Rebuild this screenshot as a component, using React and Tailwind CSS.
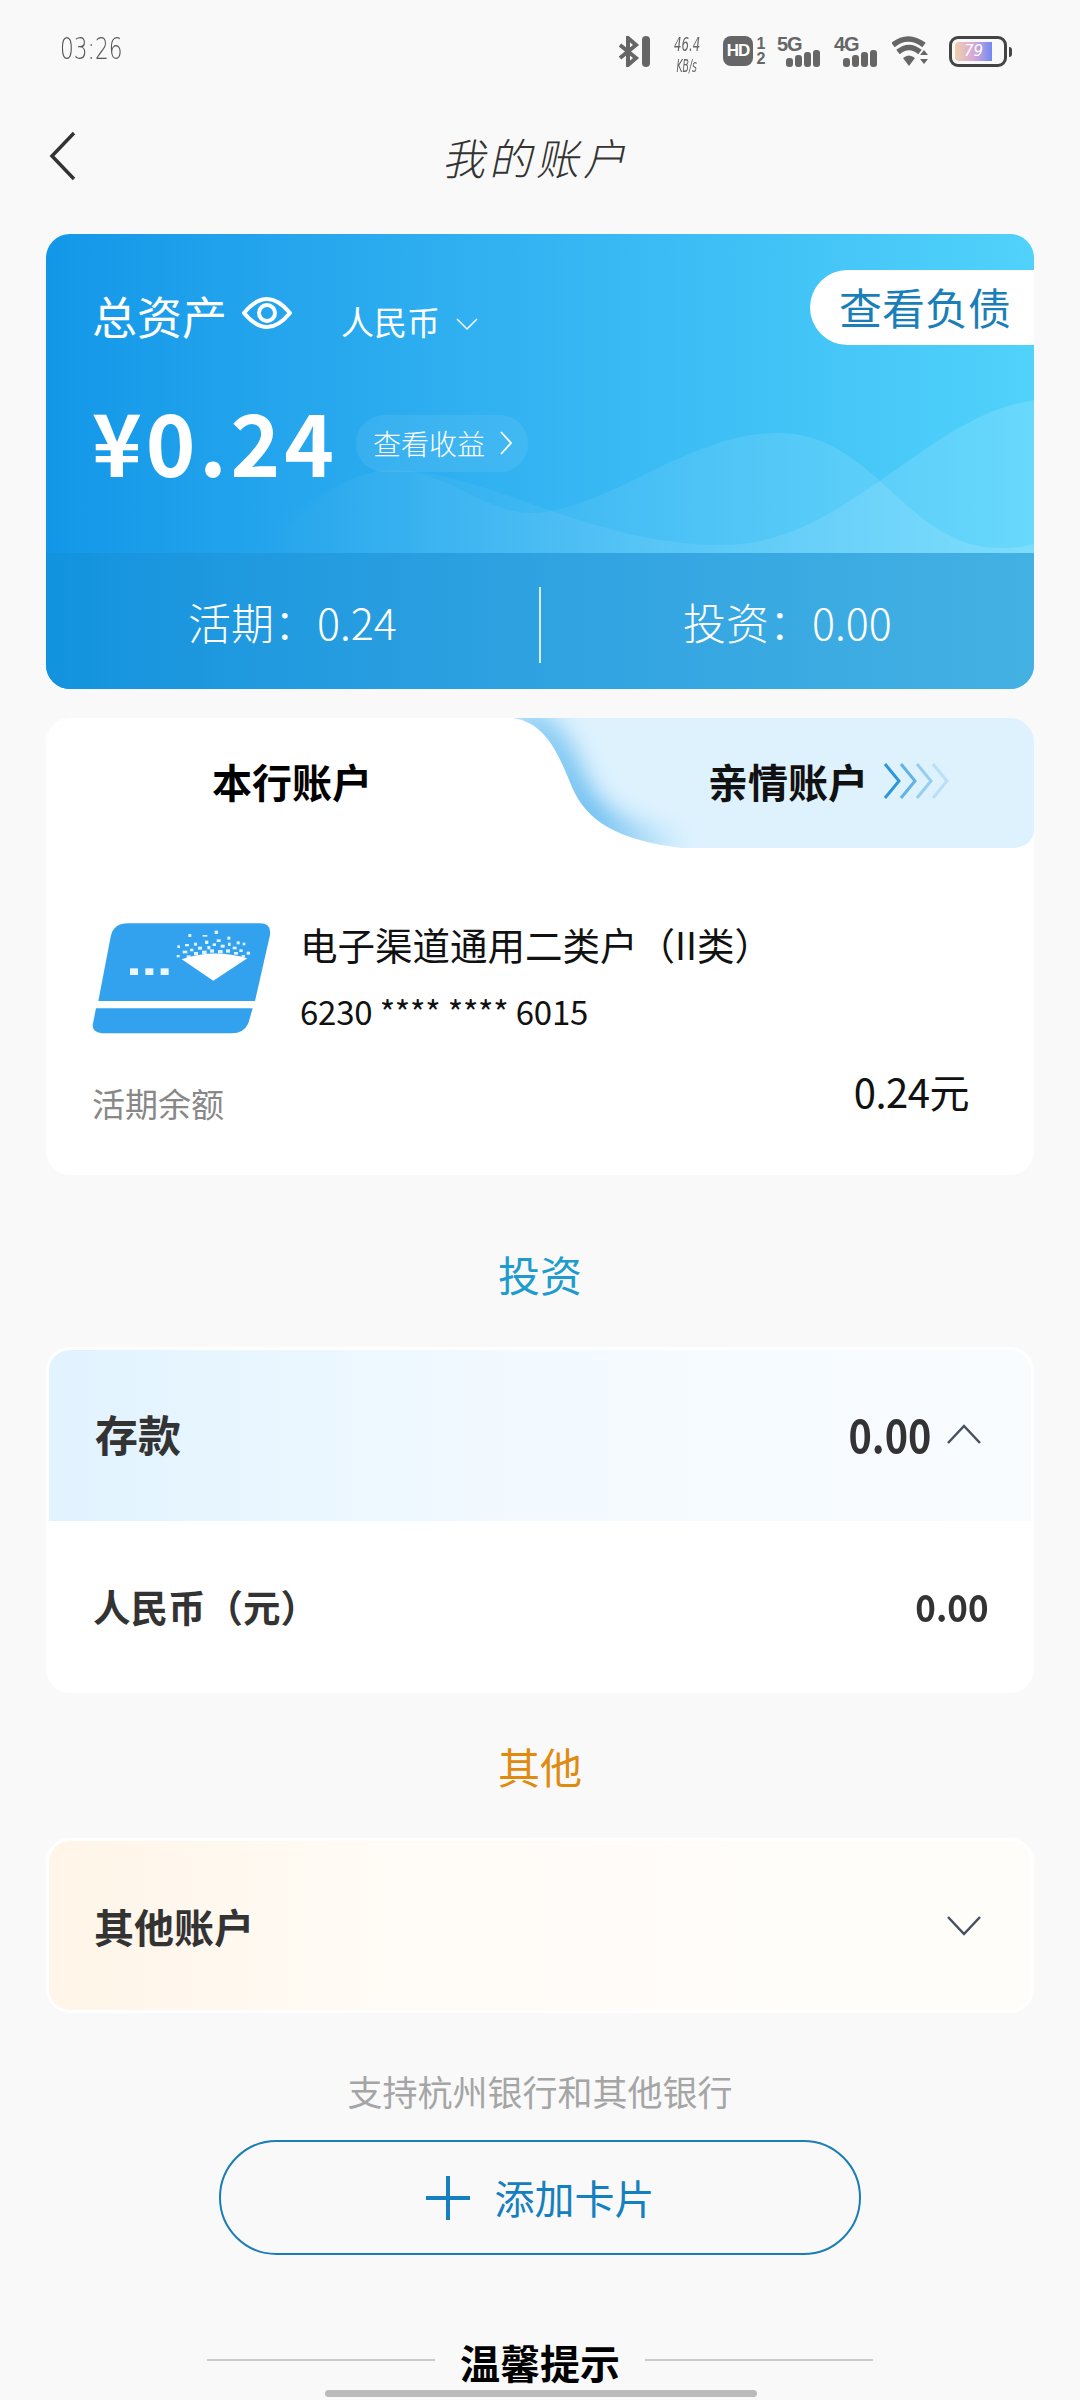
function Signal({ label }) {
  return (
    <div className="relative h-[32px] w-[44px]">
      <span className="absolute top-[-3px] left-0 font-['Liberation_Sans'] text-[20px] leading-[22px] font-bold tracking-[-1px] whitespace-nowrap text-[#666]">{label}</span>
      <svg width="44" height="32" viewBox="0 0 44 32" className="absolute top-0 left-0 block">
        <rect x="9" y="22" width="7" height="9" rx="3" fill="#666" />
        <rect x="18" y="19" width="7" height="12" rx="3" fill="#666" />
        <rect x="27" y="16" width="7" height="15" rx="3" fill="#666" />
        <rect x="36" y="14" width="7" height="17" rx="3" fill="#666" />
      </svg>
    </div>
  );
}

function StatusBar() {
  return (
    <div className="flex h-[100px] items-start pt-[32px] pl-[60px]">
      <span className="origin-left scale-x-[0.7] font-['DejaVu_Sans'] text-[31px] leading-[32px] font-extralight text-[#555]">03:26</span>
      <div className="ml-auto mr-[68px] flex items-start pt-[4px]">
        <svg width="32" height="31" viewBox="0 0 32 31" className="block">
          <path d="M2 9 L18 22 L10 29 V2 L18 9 L2 22" fill="none" stroke="#666" strokeWidth="4" />
          <rect x="24" y="0" width="8" height="31" rx="4" fill="#666" />
        </svg>
        <div className="ml-[22px] flex w-[30px] flex-col items-center font-['DejaVu_Sans'] text-[#666] italic">
          <span className="origin-center scale-x-[0.62] text-[19px] leading-[16px] font-extralight whitespace-nowrap">46.4</span>
          <span className="mt-[7px] origin-center scale-x-[0.55] text-[17px] leading-[14px] font-extralight whitespace-nowrap">KB/s</span>
        </div>
        <div className="ml-[21px] flex h-[30px] w-[30px] items-center justify-center rounded-[8px] bg-[#666] font-['Liberation_Sans'] text-[17px] font-bold tracking-[-1px] text-white">HD</div>
        <div className="ml-[2px] flex w-[12px] flex-col items-center font-['Liberation_Sans'] text-[16px] leading-[15px] font-bold text-[#666]">
          <span>1</span>
          <span>2</span>
        </div>
        <div className="ml-[10px]"><Signal label="5G" /></div>
        <div className="ml-[13px]"><Signal label="4G" /></div>
        <svg width="36" height="30" viewBox="0 0 36 30" className="ml-[14px] block">
          <path d="M1 9 Q16 -3 32 9" fill="none" stroke="#666" strokeWidth="5.5" />
          <path d="M6 16 Q17 7 28 16" fill="none" stroke="#666" strokeWidth="5.5" />
          <path d="M11 22 L17 30 L23 22 Q17 17 11 22 Z" fill="#666" />
          <path d="M28 19 L32 14 L36 19 Z M28 23 L36 23 L32 28 Z" fill="#666" />
        </svg>
        <div className="ml-[21px] flex items-center">
          <div className="h-[31px] w-[58px] rounded-[9px] border-[3px] border-[#444] p-[3px]">
            <div className="flex h-full w-[37px] items-center justify-center rounded-l-[4px] bg-linear-to-r from-[#f0d0a8] via-[#d8a8d8] to-[#7088f0] font-['DejaVu_Sans'] text-[15px] font-extralight text-white italic">79</div>
          </div>
          <div className="ml-[2px] h-[10px] w-[3px] rounded-r-sm bg-[#444]" />
        </div>
      </div>
    </div>
  );
}

function NavBar() {
  return (
    <div className="relative flex h-[134px] items-start justify-center pt-[26px]">
      <svg width="30" height="50" viewBox="0 0 30 50" className="absolute top-[31px] left-[48px]">
        <polyline points="26,2 4,25 26,48" fill="none" stroke="#333" strokeWidth="3.5" />
      </svg>
      <span className="-skew-x-12 text-[43px] leading-[60px] font-extralight tracking-[4px] text-[#333]">我的账户</span>
    </div>
  );
}

function AssetsCard() {
  return (
    <div className="relative mx-[46px] overflow-hidden rounded-[24px] bg-linear-to-r from-[#1297e8] to-[#50d2fb] text-white">
      <svg width="989" height="319" viewBox="0 0 989 319" className="absolute top-0 left-0">
        <defs>
          <linearGradient id="waveFade" x1="200" y1="0" x2="989" y2="0" gradientUnits="userSpaceOnUse">
            <stop offset="0" stopColor="#fff" stopOpacity="0" />
            <stop offset="0.55" stopColor="#fff" stopOpacity="0.08" />
            <stop offset="1" stopColor="#fff" stopOpacity="0.14" />
          </linearGradient>
        </defs>
        <path d="M190 319 C260 270 300 236 346 236 C400 236 440 279 484 279 C560 279 640 199 732 199 C830 199 860 314 954 314 C970 314 980 312 989 310 V319 Z" fill="url(#waveFade)" />
        <path d="M210 319 C270 270 300 236 346 236 C440 236 540 311 677 311 C800 311 880 180 989 166 V319 Z" fill="url(#waveFade)" />
      </svg>
      <div className="absolute top-[36px] right-0 flex h-[75px] w-[224px] items-center rounded-l-[38px] bg-white pb-[4px] pl-[29px] text-[43px] leading-[60px] text-[#1a7fb8]">查看负债</div>

      <div className="relative h-[319px] pt-[52px] pl-[46px]">
        <div className="flex h-[60px] items-center">
          <span className="text-[45px] leading-[60px]">总资产</span>
          <svg width="50" height="36" viewBox="0 0 50 36" className="mb-[6px] ml-[15px]">
            <path d="M2 18 Q25 -10 48 18 Q25 46 2 18 Z" fill="none" stroke="#fff" strokeWidth="4" />
            <circle cx="25" cy="18" r="8" fill="none" stroke="#fff" strokeWidth="4" />
          </svg>
          <span className="mt-[10px] ml-[49px] text-[33px] leading-[44px]">人民币</span>
          <svg width="22" height="14" viewBox="0 0 22 14" className="mt-[16px] ml-[16px]">
            <polyline points="1,2 11,12 21,2" fill="none" stroke="#fff" strokeWidth="1.5" />
          </svg>
        </div>
        <div className="mt-[44px] flex h-[100px] items-center">
          <span className="w-[263px] origin-left scale-x-[0.98] text-[86px] leading-[100px] font-bold tracking-[4px] whitespace-nowrap">¥0.24</span>
          <div className="mt-[6px] ml-[1px] flex h-[57px] w-[172px] items-center rounded-full bg-white/[0.07] pl-[17px]">
            <span className="text-[28px] leading-[40px] font-light">查看收益</span>
            <svg width="14" height="26" viewBox="0 0 14 26" className="ml-[14px]">
              <polyline points="2,2 12,13 2,24" fill="none" stroke="#fff" strokeWidth="1.8" />
            </svg>
          </div>
        </div>
      </div>

      <div className="relative flex h-[136px] items-center bg-linear-to-r from-[#1293de] to-[#44b1e3]">
        <div className="flex-1 text-center text-[43px] leading-[60px] font-light">活期：0.24</div>
        <div className="mt-[8px] h-[76px] w-[2px] bg-white/80" />
        <div className="flex-1 text-center text-[43px] leading-[60px] font-light">投资：0.00</div>
      </div>
    </div>
  );
}

// scattered specks above the envelope in the card mark
const specks = [
  [355, 102, 9, 9], [398, 105, 14, 5], [434, 92, 10, 10], [472, 110, 9, 9], [322, 136, 8, 8],
  [345, 132, 12, 7], [372, 128, 9, 9], [405, 122, 10, 10], [440, 118, 12, 8], [500, 124, 9, 9],
  [518, 128, 8, 8], [338, 152, 14, 8], [320, 165, 9, 7], [530, 155, 10, 9], [508, 148, 10, 8],
  [360, 146, 10, 8], [384, 140, 12, 9], [412, 138, 9, 10], [428, 130, 10, 8], [452, 134, 12, 9],
  [474, 128, 8, 10], [488, 140, 12, 8], [350, 166, 12, 8], [372, 156, 12, 10], [396, 152, 14, 10],
  [420, 148, 12, 10], [444, 150, 14, 10], [468, 148, 12, 10], [492, 156, 12, 8], [515, 165, 10, 7],
];

function CardIcon() {
  return (
    <svg width="184" height="118" viewBox="60 60 552 354" className="block">
      <path d="M85 303 L122 110 Q130 70 175 70 L570 70 Q605 70 600 105 L555 303 Z" fill="#33a2ee" />
      <path d="M78 325 L548 325 L535 370 Q522 400 485 400 L105 400 Q60 400 70 365 Z" fill="#33a2ee" />
      <rect x="180" y="205" width="24" height="20" fill="#fff" fillOpacity="0.9" />
      <rect x="226" y="205" width="24" height="20" fill="#fff" fillOpacity="0.9" />
      <rect x="272" y="205" width="24" height="20" fill="#fff" fillOpacity="0.9" />
      <path d="M335 178 Q430 145 532 175 L430 242 Z" fill="#fff" />
      <g fill="#fff" fillOpacity="0.85">
        {specks.map(([x, y, w, h]) => (
          <rect key={`${x}-${y}`} x={x} y={y} width={w} height={h} />
        ))}
      </g>
    </svg>
  );
}

function Chevrons() {
  return (
    <svg width="66" height="38" viewBox="0 0 66 38" className="ml-[15px] block">
      <polyline points="2,2 16,19 2,36" fill="none" stroke="#2d97dc" strokeWidth="3" />
      <polyline points="18,2 32,19 18,36" fill="none" stroke="#2d97dc" strokeOpacity="0.7" strokeWidth="3" />
      <polyline points="34,2 48,19 34,36" fill="none" stroke="#2d97dc" strokeOpacity="0.4" strokeWidth="3" />
      <polyline points="50,2 64,19 50,36" fill="none" stroke="#2d97dc" strokeOpacity="0.2" strokeWidth="3" />
    </svg>
  );
}

function AccountCard() {
  const curve = 'M467 0 C500 5 512 35 526 69 C540 102 570 122 636 130';
  return (
    <div className="mx-[46px] mt-[29px] h-[457px] overflow-hidden rounded-[24px] bg-white">
      <div className="relative flex h-[130px] items-start pt-[33px]">
        <svg width="989" height="130" viewBox="0 0 989 130" className="absolute top-0 left-0">
          <defs>
            <clipPath id="tabShape">
              <path d={`${curve} L965 130 Q989 130 989 106 V0 Z`} />
            </clipPath>
            <linearGradient id="tabEdge" x1="470" y1="0" x2="640" y2="0" gradientUnits="userSpaceOnUse">
              <stop offset="0" stopColor="#8fd0f5" />
              <stop offset="0.45" stopColor="#55b4ee" />
              <stop offset="1" stopColor="#def2fe" />
            </linearGradient>
            <filter id="tabBlur" x="-20%" y="-50%" width="140%" height="200%">
              <feGaussianBlur stdDeviation="13" />
            </filter>
          </defs>
          <g clipPath="url(#tabShape)">
            <rect width="989" height="130" fill="#def2fe" />
            <path d={curve} fill="none" stroke="url(#tabEdge)" strokeWidth="28" filter="url(#tabBlur)" />
          </g>
        </svg>
        <div className="relative w-[492px] text-center text-[40px] leading-[60px] font-bold text-black">本行账户</div>
        <div className="relative flex items-center pl-[170px] text-[40px] leading-[60px] font-bold text-[#111]">
          <span>亲情账户</span>
          <Chevrons />
        </div>
      </div>

      <div className="mt-[72px] flex items-start pl-[44px]">
        <CardIcon />
        <div className="ml-[26px]">
          <div className="-mt-[1px] text-[37.5px] leading-[50px] text-[#111]">电子渠道通用二类户（II类）</div>
          <div className="mt-[19px] text-[33px] leading-[46px] tracking-[-0.2px] text-[#111]">6230 **** **** 6015</div>
        </div>
      </div>

      <div className="mt-[30px] flex items-start justify-between pr-[65px] pl-[46px]">
        <span className="mt-[12px] text-[33px] leading-[46px] text-[#888]">活期余额</span>
        <span className="text-[40px] leading-[46px] tracking-[-0.5px] text-[#111]">0.24元</span>
      </div>
    </div>
  );
}

function AccordionChevron({ up }) {
  return (
    <svg width="38" height="24" viewBox="0 0 38 24" className="block">
      <polyline points={up ? '3,21 19,4 35,21' : '3,3 19,20 35,3'} fill="none" stroke="#475060" strokeWidth="2.5" />
    </svg>
  );
}

export default function App() {
  return (
    <div className="relative h-[2400px] w-[1080px] overflow-hidden bg-[#f9f9f9] font-['Noto_Sans_CJK_SC','Noto_Sans',sans-serif]">
      <StatusBar />
      <NavBar />
      <AssetsCard />
      <AccountCard />

      <div className="mt-[69px] mb-[43px] text-center text-[42px] leading-[60px] text-[#1f9ccf]">投资</div>

      <div className="mx-[46px] h-[346px] overflow-hidden rounded-[24px] border-[3px] border-white bg-white">
        <div className="flex h-[171px] items-center bg-linear-to-r from-[#e1f3ff] via-[#f3faff] via-50% to-[#f9fcff] pr-[48px] pl-[46px]">
          <span className="mb-[6px] text-[43px] leading-[60px] font-bold text-[#333]">存款</span>
          <span className="mr-[14px] mb-[6px] ml-auto origin-right scale-x-[0.86] text-[46px] leading-[60px] font-bold text-[#333]">0.00</span>
          <div className="mb-[4px]"><AccordionChevron up /></div>
        </div>
        <div className="flex h-[169px] items-center justify-between pr-[42px] pl-[44px]">
          <span className="text-[37.5px] leading-[50px] font-bold text-[#333]">人民币（元）</span>
          <span className="origin-right scale-x-[0.92] text-[38px] leading-[50px] font-bold text-[#333]">0.00</span>
        </div>
      </div>

      <div className="mt-[43px] mb-[42px] text-center text-[42px] leading-[60px] text-[#e08a10]">其他</div>

      <div className="mx-[46px] flex h-[175px] items-center rounded-[24px] border-[3px] border-white bg-linear-to-r from-[#fff5e8] via-[#fffcf8] via-40% to-[#fffdfa] pr-[48px] pl-[45px]">
        <span className="text-[40px] leading-[60px] font-bold text-[#333]">其他账户</span>
        <div className="ml-auto"><AccordionChevron /></div>
      </div>

      <div className="mt-[48px] text-center text-[35px] leading-[60px] text-[#a5a5a5]">支持杭州银行和其他银行</div>

      <div className="mx-auto mt-[19px] flex h-[115px] w-[642px] items-center justify-center rounded-full border-2 border-[#1a7db5] text-[#1580bf]">
        <svg width="44" height="44" viewBox="0 0 44 44" className="block">
          <path d="M0 22 H44 M22 0 V44" fill="none" stroke="#1580bf" strokeWidth="4" />
        </svg>
        <span className="mb-[2px] ml-[25px] text-[40px] leading-[60px]">添加卡片</span>
      </div>

      <div className="mt-[77px] flex h-[60px] items-center justify-center">
        <div className="mb-[5px] h-[2px] w-[228px] bg-[#ccc]" />
        <span className="mx-[25px] text-[40px] leading-[60px] font-bold text-black">温馨提示</span>
        <div className="mb-[5px] h-[2px] w-[228px] bg-[#ccc]" />
      </div>

      <div className="absolute top-[2390px] left-[325px] h-[7px] w-[432px] rounded-full bg-[#bbb]" />
    </div>
  );
}
